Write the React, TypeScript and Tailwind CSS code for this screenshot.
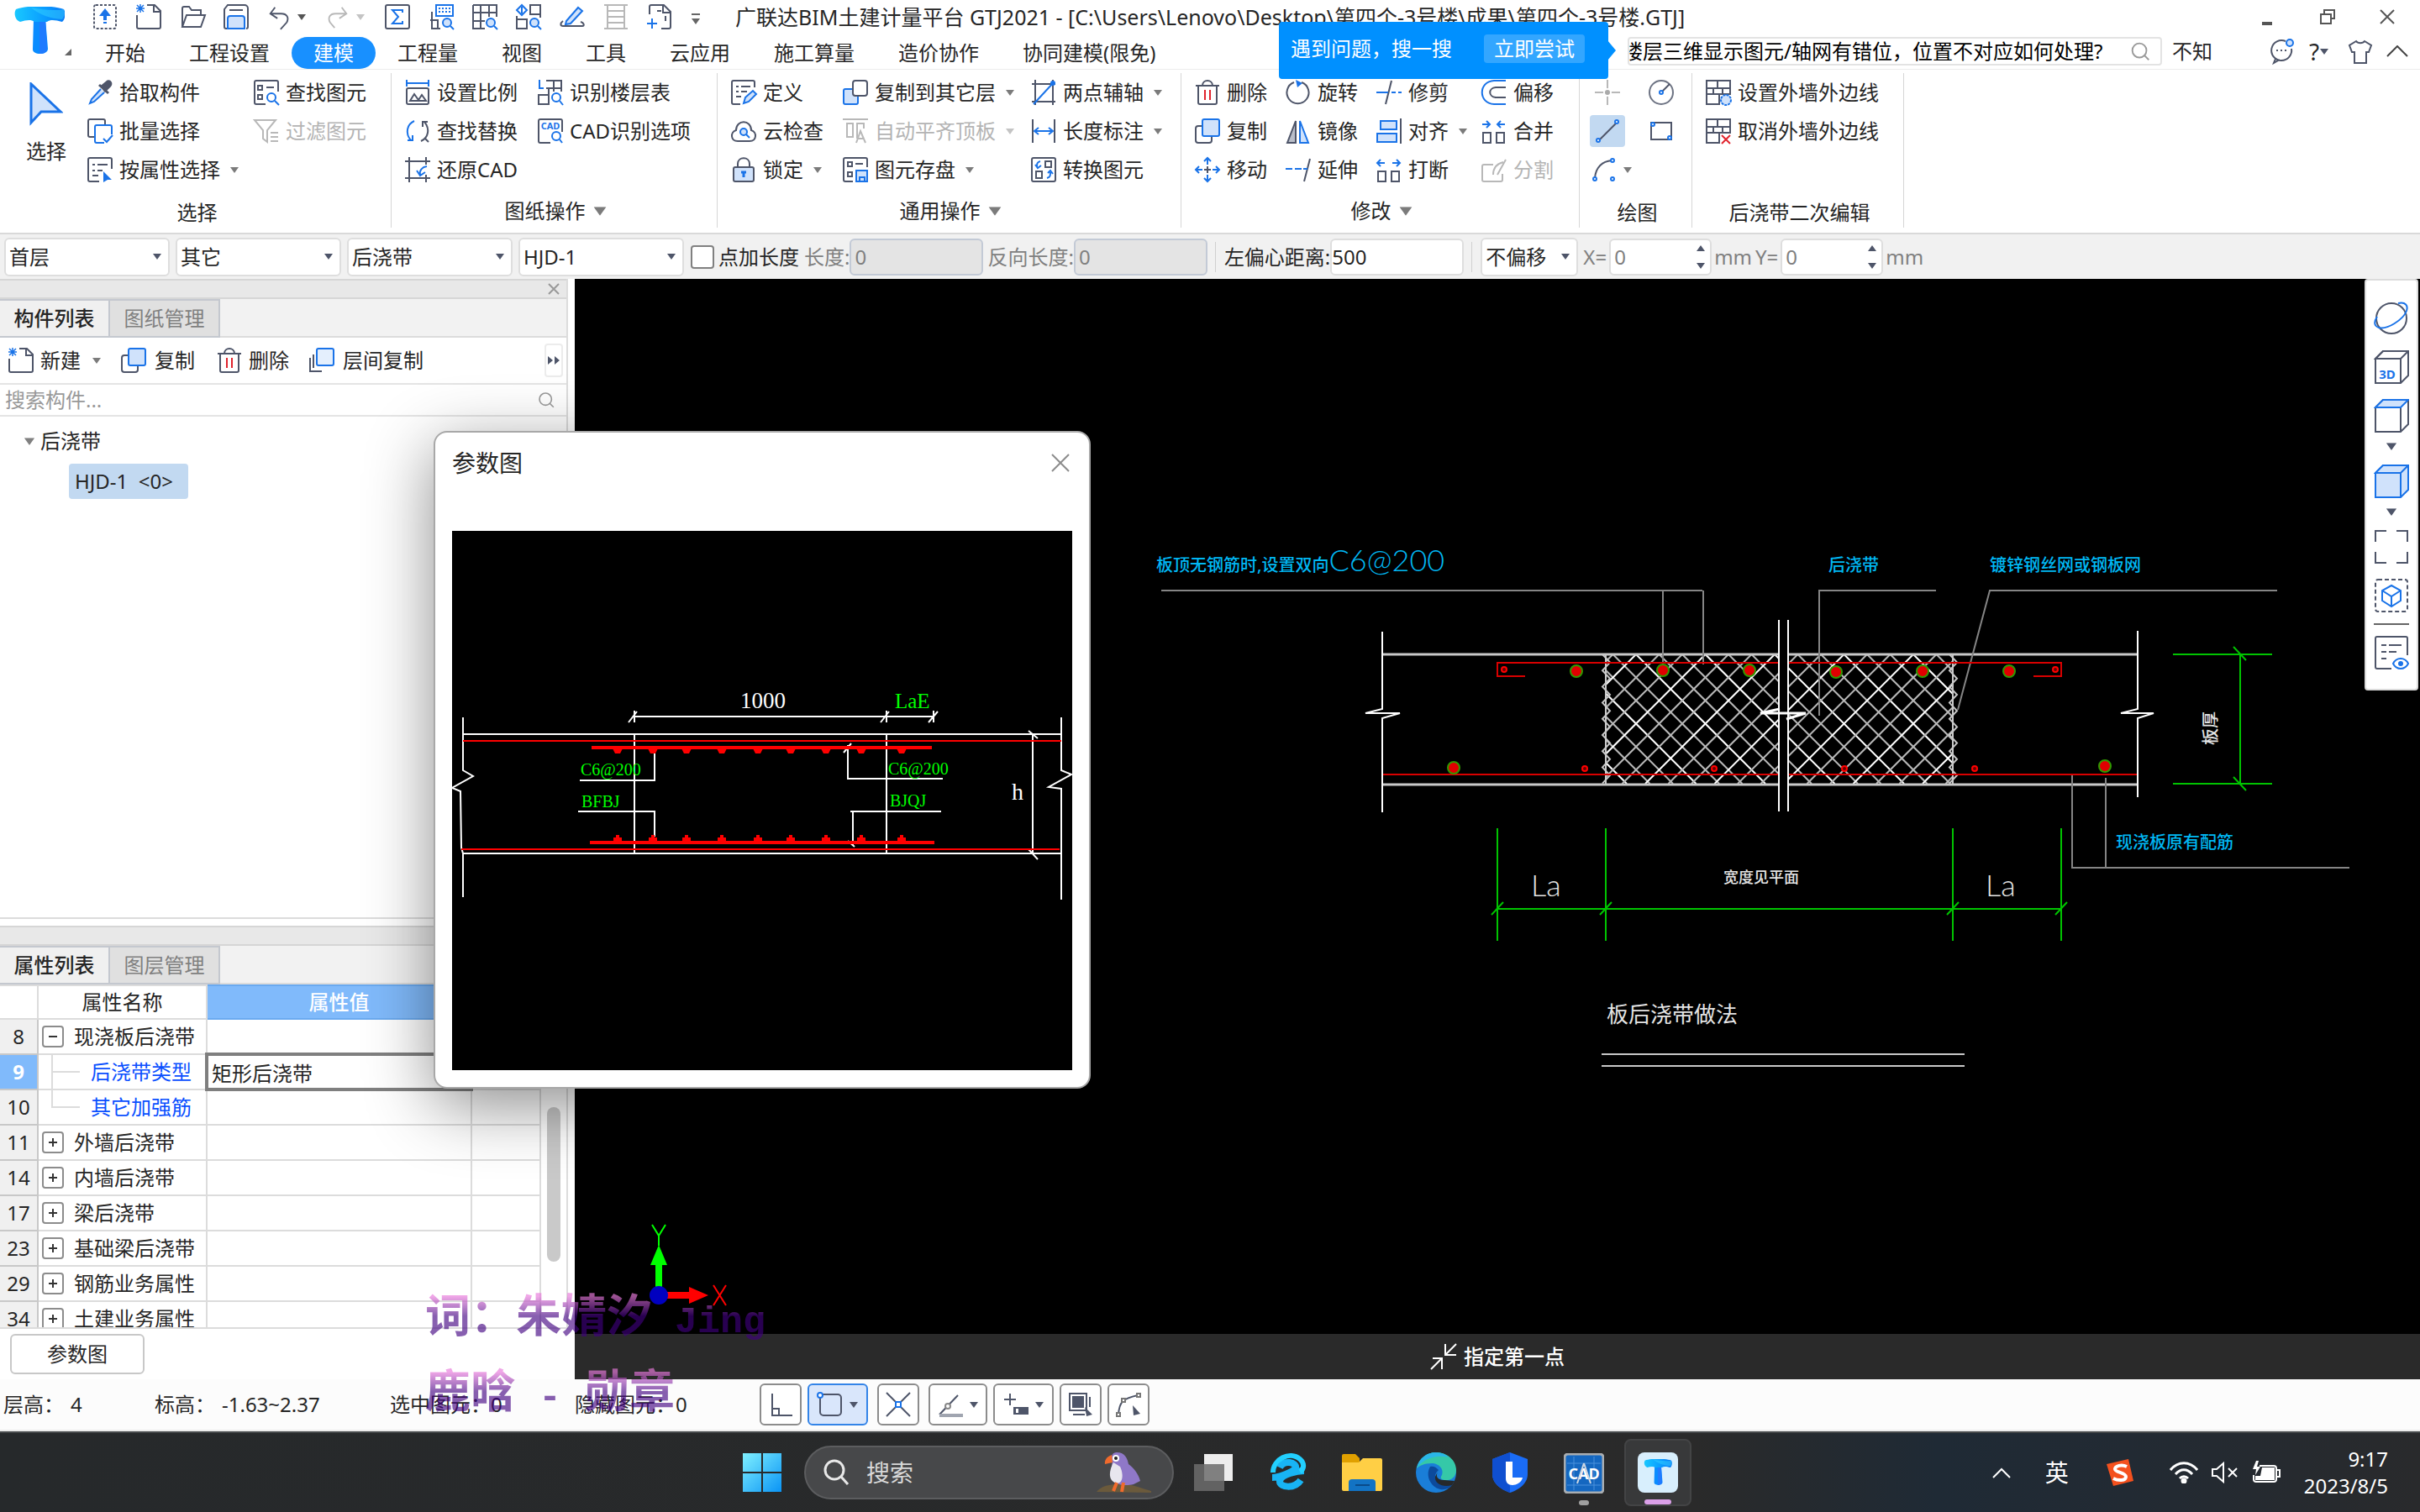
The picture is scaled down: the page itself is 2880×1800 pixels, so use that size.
import { useState } from "react";
import type { ReactNode } from "react";

const D = "#4e5569";
const B = "#1a73e8";
const L = "#d0e2fb";
const G = "#b8b8b8";

const ICONS: Record<string, ReactNode> = {
  upload: (
    <>
      <rect x="2" y="1" width="26" height="28" rx="2" stroke={D} strokeDasharray="3 2" />
      <path d="M15 5l7 9h-5v5h-4v-5H8zM13 21h4v2h-4z" fill={B} />
    </>
  ),
  newFile: (
    <>
      <path d="M13 1h9l7 7v19a2 2 0 0 1-2 2H3a2 2 0 0 1-2-2V13M21 1v8h8" stroke={D} />
      <path d="M1 1l8 8M9 1L1 9M5 0v10M0 5h10" stroke={B} strokeWidth="1.5" />
    </>
  ),
  open: <path d="M3 27V5a2 2 0 0 1 2-2h6l3 4h11v5M3 27l5-14h22l-5 14z" stroke={D} />,
  save: (
    <>
      <path d="M6 29H3a2 2 0 0 1-2-2V6l4-5h20a4 4 0 0 1 4 4v22a2 2 0 0 1-2 2" stroke={D} />
      <path d="M7 7h16" stroke={D} />
      <path d="M5 29V17a3 3 0 0 1 3-3h14a3 3 0 0 1 3 3v12z" fill={L} stroke={B} />
    </>
  ),
  undo: <path d="M10 3L4 11l9 6M5 11h13c7 0 10 5 7 11l-8 9" stroke={D} />,
  redo: <path d="M20 3l6 8-9 6M25 11H12c-7 0-10 5-7 11l6 7" stroke={G} />,
  sum: (
    <>
      <rect x="1" y="1" width="28" height="28" rx="2" stroke={D} />
      <path d="M21 10V7H9l7 8-7 8h12v-3" stroke={B} />
    </>
  ),
  calcFind: (
    <>
      <path d="M4 9v20h10M2 19h9v9" stroke={D} />
      <rect x="9" y="1" width="20" height="13" stroke={B} />
      <path d="M12 5h14M12 9h14" stroke={B} strokeDasharray="2 2" />
      <circle cx="22" cy="22" r="5" stroke={B} fill={L} />
      <path d="M26 26l4 4" stroke={B} />
    </>
  ),
  gridFind: (
    <>
      <path d="M1 1h28v14M1 1v28h14M1 10h28M1 20h14M10 1v28M20 1v14" stroke={D} />
      <circle cx="22" cy="22" r="5" stroke={B} fill={L} />
      <path d="M26 26l4 4" stroke={B} />
    </>
  ),
  swapFind: (
    <>
      <path d="M17 1v11h12V1zM1 18h12v11H1zM29 12v4M1 14v4" stroke={D} />
      <path d="M7 1L1 7l6 6 6-6zM7 3v8" stroke={B} />
      <circle cx="22" cy="22" r="5" stroke={B} fill={L} />
      <path d="M26 26l4 4" stroke={B} />
    </>
  ),
  pen: (
    <>
      <path d="M8 20L22 4l5 4-14 15-6 1z" stroke={B} fill={L} />
      <path d="M4 20c-4 3-3 6 0 6h23c3 0 2-4-2-5" stroke={D} />
    </>
  ),
  ladder: <path d="M5 1v28M25 1v28M1 1h28M1 29h28M5 8h20M5 15h20M5 22h20" stroke={G} />,
  addDoc: (
    <>
      <path d="M3 12V3a2 2 0 0 1 2-2h15l8 8v18a2 2 0 0 1-2 2h-9M12 8h5M22 14v6M19 1v9h9" stroke={D} />
      <path d="M6 17v12M0 23h12" stroke={B} />
    </>
  ),
  dropper: (
    <>
      <path d="M17 8l7-6c3-1 5 2 3 5l-6 6zM14 6l11 10" fill={D} stroke={D} strokeWidth="3" />
      <path d="M16 11L5 23l-2 5 5-2 12-11" stroke={B} fill={L} />
    </>
  ),
  listFind: (
    <>
      <path d="M29 14V3a2 2 0 0 0-2-2H3a2 2 0 0 0-2 2v24a2 2 0 0 0 2 2h11" stroke={D} />
      <path d="M5 7h5v5H5zM5 18h5v5H5zM15 9h9" stroke={D} />
      <circle cx="21" cy="21" r="5" stroke={B} />
      <path d="M25 25l5 5" stroke={B} />
    </>
  ),
  batch: (
    <>
      <path d="M8 22H3a2 2 0 0 1-2-2V3a2 2 0 0 1 2-2h16a2 2 0 0 1 2 2v4" stroke={D} />
      <path d="M20 29h-9a2 2 0 0 1-2-2V10a2 2 0 0 1 2-2h16a2 2 0 0 1 2 2v9" stroke={B} />
      <path d="M19 24l4 4 7-8" stroke={B} />
    </>
  ),
  filter: <path d="M1 2h25L16 14v14l-5-4V14zM20 17h9M20 22h9M20 27h9" stroke={G} />,
  attrPick: (
    <>
      <path d="M29 14V3a2 2 0 0 0-2-2H3a2 2 0 0 0-2 2v24a2 2 0 0 0 2 2h11M6 9h3M12 9h12M6 16h3M12 16h6M6 22h7" stroke={D} />
      <path d="M19 17l10 10h-5l-5 3z" fill={B} />
    </>
  ),
  scale: (
    <>
      <path d="M2 4h26M2 0v8M28 0v8" stroke={B} />
      <path d="M4 10h22a2 2 0 0 1 2 2v15a2 2 0 0 1-2 2H4a2 2 0 0 1-2-2V12a2 2 0 0 1 2-2zM6 25l5-8 5 7 4-6 5 7z" stroke={D} />
    </>
  ),
  floorTable: (
    <>
      <path d="M10 1h18v13M10 10h18M19 1v13M1 18h12v11H1zM13 18v-7" stroke={D} />
      <path d="M2 0v10h5" stroke={B} />
      <circle cx="22" cy="21" r="5" stroke={B} />
      <path d="M26 25l4 5" stroke={B} />
    </>
  ),
  replace: (
    <>
      <path d="M11 3C2 7 0 18 7 26M3 26h6v-6" stroke={B} />
      <path d="M19 27c9-4 11-15 4-23M27 4h-6v6M24 24l4 4" stroke={D} />
    </>
  ),
  cadFind: (
    <>
      <path d="M29 16V3a2 2 0 0 0-2-2H3a2 2 0 0 0-2 2v24a2 2 0 0 0 2 2h12" stroke={D} />
      <text x="15" y="13" textAnchor="middle" fontSize="11" fontWeight="700" fill={B}>CAD</text>
      <circle cx="22" cy="21" r="5" stroke={B} />
      <path d="M26 25l3 4" stroke={B} />
    </>
  ),
  restore: (
    <>
      <path d="M0 5h30M0 25h30M5 0v30M25 0v9M25 21v9" stroke={D} />
      <path d="M26 11c-6 1-9 5-8 10M14 16l4 6 6-4" stroke={B} />
    </>
  ),
  define: (
    <>
      <path d="M28 9V3a2 2 0 0 0-2-2H3a2 2 0 0 0-2 2v24a2 2 0 0 0 2 2h8M6 8h3M12 8h11M6 14h3M12 14h7M6 20h6" stroke={D} />
      <path d="M15 28l2-7 9-8 4 4-9 9z" stroke={B} fill={L} />
    </>
  ),
  cloud: (
    <>
      <path d="M8 27c-9 0-9-11-2-13C6 1 24 1 24 14c7 2 7 13-2 13z" stroke={D} />
      <circle cx="15" cy="16" r="4" stroke={B} fill={L} />
      <path d="M18 19l4 4" stroke={B} />
    </>
  ),
  lock: (
    <>
      <path d="M8 12V8c0-9 14-9 14 0v4" stroke={D} />
      <rect x="3" y="12" width="24" height="17" rx="2" fill={L} stroke={D} />
      <path d="M15 17v7M12 18h6" stroke={B} strokeWidth="3" />
    </>
  ),
  copyTo: (
    <>
      <rect x="1" y="11" width="17" height="18" rx="2" fill={L} stroke={B} />
      <rect x="12" y="1" width="17" height="18" rx="3" fill="#fff" stroke={D} />
    </>
  ),
  autoTop: <path d="M0 1h30M5 6h7v16H5zM17 24V6h8v6M16 29l5-14 6 14M18 24h7" stroke={G} />,
  saveElem: (
    <>
      <path d="M29 12V3a2 2 0 0 0-2-2H3a2 2 0 0 0-2 2v24a2 2 0 0 0 2 2h9M6 6h5v5H6zM15 8h9M6 18h5v5H6z" stroke={D} />
      <path d="M16 16h13v13H16zM20 29v-5h6v5" stroke={B} fill={L} />
    </>
  ),
  twoPoint: (
    <>
      <path d="M5 0v30M26 0v30M1 5h28M1 26h28" stroke={D} />
      <path d="M3 29L27 3" stroke={B} />
      <circle cx="26" cy="4" r="3" fill={B} />
    </>
  ),
  length: (
    <>
      <path d="M2 1v28M28 1v28" stroke={D} />
      <path d="M5 15h20M9 11l-5 4 5 4M21 11l5 4-5 4" stroke={B} />
    </>
  ),
  convert: (
    <>
      <path d="M3 1h24a2 2 0 0 1 2 2v24a2 2 0 0 1-2 2H3a2 2 0 0 1-2-2V3a2 2 0 0 1 2-2zM17 5h7v7h-7zM6 17h7v8H6z" stroke={D} />
      <path d="M11 5c-4 1-4 3-4 7M5 9l3 4 4-3M19 25c4-1 4-3 4-7M20 19l3-3 3 4" stroke={B} />
    </>
  ),
  trash: (
    <>
      <path d="M1 7h28M9 7c0-8 12-8 12 0M4 7v20a2 2 0 0 0 2 2h18a2 2 0 0 0 2-2V7" stroke={D} />
      <path d="M12 12v12M18 12v12" stroke="#e0242e" />
    </>
  ),
  copy: (
    <>
      <rect x="1" y="9" width="19" height="20" rx="3" stroke={D} />
      <rect x="9" y="1" width="20" height="20" rx="2" fill={L} stroke={B} />
    </>
  ),
  move: (
    <>
      <path d="M15 11v8M11 15h8" stroke={D} />
      <path d="M15 9V1M11 5l4-4 4 4M15 21v8M11 25l4 4 4-4M9 15H1M5 11l-4 4 4 4M21 15h8M25 11l4 4-4 4" stroke={B} />
    </>
  ),
  rotate: (
    <>
      <path d="M19 3a13 13 0 1 1-9 0" stroke={D} />
      <path d="M12 0l8 4-6 5z" fill={B} />
    </>
  ),
  mirror: (
    <>
      <path d="M12 3v26H2z" fill="#b9bec9" stroke={D} />
      <path d="M17 3v26h10z" fill={L} stroke={B} />
    </>
  ),
  extend: (
    <>
      <path d="M29 2l-7 27" stroke={D} />
      <path d="M0 14h8M11 14h8M21 14h5" stroke={B} />
    </>
  ),
  trim: (
    <>
      <path d="M18 1l-7 28" stroke={D} />
      <path d="M0 15h14M18 15h5M26 15h4" stroke={B} />
    </>
  ),
  align: (
    <>
      <path d="M29 0v30" stroke={D} />
      <path d="M5 3h19v10H5zM1 18h23v10H1z" fill={L} stroke={B} />
    </>
  ),
  breakUp: (
    <>
      <path d="M2 17h9v12H2zM18 17h9v12h-9z" stroke={D} />
      <path d="M10 7H1M5 3L1 7l4 4M19 7h9M24 3l4 4-4 4" stroke={B} />
    </>
  ),
  offset: (
    <>
      <path d="M29 1H15C-4 2-4 28 15 29h14" stroke={B} />
      <path d="M29 9H17c-9 1-9 11 0 12h12" stroke={D} />
    </>
  ),
  merge: (
    <>
      <path d="M2 17h9v12H2zM18 17h9v12h-9z" stroke={D} />
      <path d="M1 7h9M6 3l4 4-4 4M28 7h-9M23 3l-4 4 4 4" stroke={B} />
    </>
  ),
  split: <path d="M14 9H3a2 2 0 0 0-2 2v16a2 2 0 0 0 2 2h20a2 2 0 0 0 2-2v-7M14 21c0-8 4-13 12-15M19 21l10-18" stroke={G} />,
  point: (
    <>
      <path d="M15 0v30M0 15h30" stroke={G} />
      <circle cx="15" cy="15" r="4" fill="#aaa" stroke="#fff" />
    </>
  ),
  circle: (
    <>
      <circle cx="15" cy="15" r="14" stroke="#6d7383" />
      <path d="M15 15L25 5" stroke={D} />
      <circle cx="15" cy="15" r="2" stroke={B} fill="#fff" />
    </>
  ),
  line: (
    <>
      <path d="M5 26L26 5" stroke={D} />
      <circle cx="4" cy="26" r="2" stroke={B} fill="#fff" />
      <circle cx="26" cy="4" r="2" stroke={B} fill="#fff" />
    </>
  ),
  rect: (
    <>
      <rect x="3" y="5" width="24" height="20" stroke={D} />
      <circle cx="5" cy="7" r="2" stroke={B} fill="#fff" />
      <circle cx="25" cy="23" r="2" stroke={B} fill="#fff" />
    </>
  ),
  arc: (
    <>
      <path d="M4 25C5 12 13 5 24 4" stroke={D} />
      <circle cx="4" cy="26" r="2" stroke={B} />
      <circle cx="25" cy="4" r="2" stroke={B} />
      <circle cx="25" cy="26" r="2" stroke={B} />
    </>
  ),
  wallSet: (
    <>
      <path d="M17 29H1V1h28v16H1M1 10h28M14 1v9M9 10v7M20 10v7M16 17v12" stroke={D} />
      <circle cx="24" cy="24" r="6" fill={L} stroke={B} strokeDasharray="3 1" />
    </>
  ),
  wallCancel: (
    <>
      <path d="M17 29H1V1h28v16H1M1 10h28M14 1v9M9 10v7M20 10v7M16 17v12" stroke={D} />
      <path d="M19 20l10 10M29 20L19 30" stroke="#e0242e" />
    </>
  ),
  layers: (
    <>
      <path d="M1 12v16h14M5 8v16" stroke={D} />
      <rect x="9" y="1" width="20" height="20" rx="2" fill="#e4effd" stroke={B} />
    </>
  ),
  chat: (
    <>
      <path d="M20 3a12 12 0 1 0 7 9M8 24l-2 5 7-4" stroke={D} />
      <path d="M9 14h2M14 14h2M19 14h2" stroke={D} />
      <circle cx="25" cy="5" r="4" fill={L} stroke={B} />
    </>
  ),
  shirt: <path d="M10 3c2 3 8 3 10 0l8 5-3 8h-3v13H8V16H5L2 8z" stroke={D} />,
  search: (
    <>
      <circle cx="14" cy="14" r="9" stroke="#999" />
      <path d="M20 20l6 6" stroke="#999" />
    </>
  ),
};

type IconProps = { name: string; className?: string };

const Icon = ({ name, className = "size-[30px]" }: IconProps) => (
  <svg viewBox="0 0 30 30" fill="none" strokeWidth="2" className={`shrink-0 overflow-visible ${className}`}>
    {ICONS[name]}
  </svg>
);

const Caret = ({ className = "text-[#7b7b7b]" }: { className?: string }) => (
  <svg viewBox="0 0 10 7" className={`h-[7px] w-[10px] shrink-0 ${className}`}>
    <path d="M0 0h10L5 7z" fill="currentColor" />
  </svg>
);

const Hammer = ({ className }: { className: string }) => (
  <svg viewBox="0 0 60 58" className={className}>
    <defs>
      <linearGradient id="head" x1="0" x2="1" y1="0" y2="0">
        <stop offset="0" stopColor="#19c8ff" />
        <stop offset="0.6" stopColor="#0a9cff" />
        <stop offset="1" stopColor="#0878f5" />
      </linearGradient>
    </defs>
    <path d="M23 14h14l3 36c0 8-19 8-18 0z" fill="#0a8cff" />
    <path d="M30 14h7l2 36c0 5-5 6-9 6z" fill="#1f7bff" />
    <path d="M2 3c14-5 42-5 57 0 3 5 1 13-2 15-8-2-14-3-18 0H24c-4-3-10-2-17 0C1 16-1 8 2 3z" fill="url(#head)" />
    <path d="M20 1c14 3 30 4 39 2 2 5 0 10-2 12-14-1-27-5-37-14z" fill="#33d2ff" opacity="0.5" />
  </svg>
);

type Tool = { icon: string; label: string; caret?: boolean; disabled?: boolean };

const ToolButton = ({ icon, label, caret, disabled }: Tool) => (
  <button type="button" disabled={disabled} className="flex h-[46px] items-center gap-2 whitespace-nowrap disabled:text-[#b4b4b4]">
    <Icon name={icon} />
    {label}
    {caret && <span className="pl-1"><Caret className={disabled ? "text-[#c4c4c4]" : "text-[#7b7b7b]"} /></span>}
  </button>
);

type GroupProps = { label: string; caret?: boolean; className: string; children: ReactNode };

const Group = ({ label, caret, className, children }: GroupProps) => (
  <section className={`flex shrink-0 ${className}`}>
    <div className="flex flex-1 flex-col">
      <div className="flex h-[138px]">{children}</div>
      <div className={`flex h-[52px] items-center justify-center gap-3 ${caret ? "" : "pt-1 pl-1"}`}>
        {label}
        {caret && <Caret className="scale-150 text-[#7b7b7b]" />}
      </div>
    </div>
    <div className="h-[184px] w-px bg-[#d6d6d6]" />
  </section>
);

const Column = ({ tools, className = "" }: { tools: Tool[]; className?: string }) => (
  <div className={`flex shrink-0 flex-col ${className}`}>
    {tools.map((tool) => (
      <ToolButton key={tool.label} {...tool} />
    ))}
  </div>
);

const QUICK = ["sum", "calcFind", "gridFind", "swapFind", "pen", "ladder", "addDoc"];
const TABS = ["开始", "工程设置", "建模", "工程量", "视图", "工具", "云应用", "施工算量", "造价协作", "协同建模(限免)"];

const Header = () => {
  const [tab, setTab] = useState("建模");
  const [query, setQuery] = useState("楼层三维显示图元/轴网有错位，位置不对应如何处理?");

  return (
    <header className="relative flex h-[82px] shrink-0 bg-white">
      <div className="flex w-[99px] shrink-0 items-end pb-4 pl-[17px]">
        <Hammer className="h-[58px] w-[60px]" />
        <svg viewBox="0 0 8 8" className="size-2"><path d="M8 0v8H0z" fill="#666" /></svg>
      </div>
      <div className="flex min-w-0 flex-1 flex-col">
        <div className="flex h-10 items-center">
          {["upload", "newFile", "open", "save"].map((name) => (
            <button key={name} type="button" aria-label={name} className="flex w-[52px] shrink-0 justify-center">
              <Icon name={name} />
            </button>
          ))}
          <button type="button" aria-label="undo" className="flex w-[70px] shrink-0 items-center gap-2 pl-[11px]">
            <Icon name="undo" className="size-7" /><Caret className="text-[#555]" />
          </button>
          <button type="button" aria-label="redo" className="flex w-[70px] shrink-0 items-center gap-2 pl-[11px]">
            <Icon name="redo" className="size-7" /><Caret className="text-[#c4c4c4]" />
          </button>
          {QUICK.map((name) => (
            <button key={name} type="button" aria-label={name} className="flex w-[52px] shrink-0 justify-center">
              <Icon name={name} />
            </button>
          ))}
          <button type="button" aria-label="customize" className="flex w-[34px] shrink-0 flex-col items-center gap-1 pt-1">
            <span className="h-[2px] w-[10px] bg-[#666]" />
            <Caret className="text-[#666]" />
          </button>
          <h1 className="flex-1 truncate pl-[30px] text-[25px]">广联达BIM土建计量平台 GTJ2021 - [C:\Users\Lenovo\Desktop\第四个-3号楼\成果\第四个-3号楼.GTJ]</h1>
          <div className="flex w-[192px] shrink-0 items-center justify-between pr-[30px]">
            <button type="button" aria-label="minimize" className="flex h-5 w-5 items-end justify-center">
              <span className="h-1 w-3 bg-[#555]" />
            </button>
            <button type="button" aria-label="restore">
              <svg viewBox="0 0 18 18" className="size-[18px]" fill="none" stroke="#555" strokeWidth="2">
                <path d="M5 5V1h12v10h-4M1 6h12v11H1z" />
              </svg>
            </button>
            <button type="button" aria-label="close">
              <svg viewBox="0 0 18 18" className="size-[18px]" fill="none" stroke="#555" strokeWidth="2">
                <path d="M1 1l16 16M17 1L1 17" />
              </svg>
            </button>
          </div>
        </div>
        <nav className="flex h-[42px] items-end">
          {TABS.map((name) => (
            <button
              key={name}
              type="button"
              onClick={() => setTab(name)}
              className={`h-[38px] shrink-0 whitespace-nowrap rounded-full px-[26px] ${tab === name ? "bg-[#1890ff] text-white" : ""}`}
            >
              {name}
            </button>
          ))}
          <div className="ml-auto flex h-[38px] items-center pb-1">
            <label className="flex h-[34px] w-[636px] items-center rounded-sm border-2 border-[#e3e3e3] bg-white">
              <input
                aria-label="搜索"
                value={query}
                onChange={(e) => setQuery(e.target.value)}
                className="min-w-0 flex-1 -indent-2 text-black outline-none"
              />
              <Icon name="search" className="mr-2.5 size-7" />
            </label>
            <span className="ml-3">不知</span>
            <div className="flex items-center pr-3.5 pl-[67px] text-[28px]">
              <button type="button" aria-label="message" className="w-[48px]"><Icon name="chat" /></button>
              <button type="button" aria-label="help" className="flex w-[46px] items-center gap-px">
                ?<Caret className="text-[#4e5569]" />
              </button>
              <button type="button" aria-label="skin" className="w-[46px]"><Icon name="shirt" /></button>
              <button type="button" aria-label="collapse">
                <svg viewBox="0 0 26 14" className="h-[14px] w-[26px]" fill="none" stroke="#444" strokeWidth="2"><path d="M1 13L13 1l12 12" /></svg>
              </button>
            </div>
          </div>
        </nav>
      </div>
      {/* Search hint bubble */}
      <div className="absolute top-[26px] right-[966px] z-10 flex h-[68px] w-[392px] items-center justify-between rounded bg-[#0090ff] pr-7 pb-1 pl-[14px] text-white">
        <span>遇到问题，搜一搜</span>
        <button type="button" className="h-[34px] rounded-sm bg-[#33a6ff] px-3 leading-[34px]">立即尝试</button>
        <svg viewBox="0 0 10 24" className="absolute top-[22px] -right-[9px] h-6 w-[10px]"><path d="M0 0l10 12L0 24z" fill="#0090ff" /></svg>
      </div>
    </header>
  );
};

const Ribbon = () => (
  <div className="flex shrink-0 border-t border-b-2 border-t-[#ececec] border-b-[#d9d9d9] bg-white pt-1">
    <Group label="选择" className="w-[466px]">
      <button type="button" className="flex w-[104px] shrink-0 flex-col items-center gap-[14px] pt-[11px] pl-1.5">
        <svg viewBox="0 0 40 52" className="h-[52px] w-10"><path d="M2 2v46l12-13h23z" fill="#d0e2fb" stroke="#1a73e8" strokeWidth="3" /></svg>
        选择
      </button>
      <Column
        className="w-[198px]"
        tools={[
          { icon: "dropper", label: "拾取构件" },
          { icon: "batch", label: "批量选择" },
          { icon: "attrPick", label: "按属性选择", caret: true },
        ]}
      />
      <Column
        tools={[
          { icon: "listFind", label: "查找图元" },
          { icon: "filter", label: "过滤图元", disabled: true },
        ]}
      />
    </Group>
    <Group label="图纸操作" caret className="w-[388px]">
      <Column
        className="w-[174px] pl-4"
        tools={[
          { icon: "scale", label: "设置比例" },
          { icon: "replace", label: "查找替换" },
          { icon: "restore", label: "还原CAD" },
        ]}
      />
      <Column
        tools={[
          { icon: "floorTable", label: "识别楼层表" },
          { icon: "cadFind", label: "CAD识别选项" },
        ]}
      />
    </Group>
    <Group label="通用操作" caret className="w-[552px]">
      <Column
        className="w-[149px] pl-4"
        tools={[
          { icon: "define", label: "定义" },
          { icon: "cloud", label: "云检查" },
          { icon: "lock", label: "锁定", caret: true },
        ]}
      />
      <Column
        className="w-[224px]"
        tools={[
          { icon: "copyTo", label: "复制到其它层", caret: true },
          { icon: "autoTop", label: "自动平齐顶板", caret: true, disabled: true },
          { icon: "saveElem", label: "图元存盘", caret: true },
        ]}
      />
      <Column
        tools={[
          { icon: "twoPoint", label: "两点辅轴", caret: true },
          { icon: "length", label: "长度标注", caret: true },
          { icon: "convert", label: "转换图元" },
        ]}
      />
    </Group>
    <Group label="修改" caret className="w-[474px]">
      <Column
        className="w-[124px] pl-4"
        tools={[
          { icon: "trash", label: "删除" },
          { icon: "copy", label: "复制" },
          { icon: "move", label: "移动" },
        ]}
      />
      <Column
        className="w-[108px]"
        tools={[
          { icon: "rotate", label: "旋转" },
          { icon: "mirror", label: "镜像" },
          { icon: "extend", label: "延伸" },
        ]}
      />
      <Column
        className="w-[125px]"
        tools={[
          { icon: "trim", label: "修剪" },
          { icon: "align", label: "对齐", caret: true },
          { icon: "breakUp", label: "打断" },
        ]}
      />
      <Column
        tools={[
          { icon: "offset", label: "偏移" },
          { icon: "merge", label: "合并" },
          { icon: "split", label: "分割", disabled: true },
        ]}
      />
    </Group>
    <Group label="绘图" className="w-[134px]">
      <div className="grid h-[138px] grid-cols-[64px_42px] grid-rows-3 items-center pl-3">
        <button type="button" aria-label="点" className="flex h-[38px] w-[42px] items-center justify-center"><Icon name="point" /></button>
        <button type="button" aria-label="圆" className="flex h-[38px] w-[42px] items-center justify-center"><Icon name="circle" /></button>
        <button type="button" aria-label="直线" className="flex h-[38px] w-[42px] items-center justify-center rounded bg-[#c2d9f1]"><Icon name="line" /></button>
        <button type="button" aria-label="矩形" className="flex h-[38px] w-[42px] items-center justify-center"><Icon name="rect" /></button>
        <button type="button" aria-label="弧" className="flex h-[38px] items-center gap-2 pl-0.5"><Icon name="arc" /><Caret /></button>
      </div>
    </Group>
    <Group label="后浇带二次编辑" className="w-[252px]">
      <Column
        className="pl-4"
        tools={[
          { icon: "wallSet", label: "设置外墙外边线" },
          { icon: "wallCancel", label: "取消外墙外边线" },
        ]}
      />
    </Group>
  </div>
);

const Select = ({ label, value, className }: { label: string; value: string; className: string }) => (
  <div className={`grid h-[46px] shrink-0 items-center ${className}`}>
    <select aria-label={label} defaultValue={value} className="col-start-1 row-start-1 h-full w-full appearance-none rounded-md border-2 border-[#dedede] bg-white pl-1 outline-none">
      <option>{value}</option>
    </select>
    <span className="pointer-events-none col-start-1 row-start-1 justify-self-end pr-2.5"><Caret className="text-[#4e5569]" /></span>
  </div>
);

const Spinner = ({ label }: { label: string }) => (
  <label className="flex shrink-0 items-center gap-[3px] text-[#808080]">
    {label}=
    <span className="flex h-11 w-[122px] items-center rounded-md border-2 border-[#dedede] bg-white pr-1.5 pl-1">
      <input defaultValue="0" className="min-w-0 flex-1 outline-none" />
      <svg viewBox="0 0 10 28" className="h-7 w-[10px]" fill="#4e5569"><path d="M0 7h10L5 0zM0 21h10l-5 7z" /></svg>
    </span>
    <span>mm</span>
  </label>
);

const OptionBar = () => (
  <div className="flex h-[53px] shrink-0 items-center bg-[#f1f1f1] pl-[5px] whitespace-nowrap">
    <div className="flex gap-[7px]">
      <Select label="楼层" value="首层" className="w-[197px]" />
      <Select label="类别" value="其它" className="w-[197px]" />
      <Select label="构件类型" value="后浇带" className="w-[197px]" />
      <Select label="构件" value="HJD-1" className="w-[197px]" />
    </div>
    <label className="ml-2 flex shrink-0 items-center gap-[5px]">
      <input type="checkbox" className="size-7 appearance-none rounded border-2 border-[#808080] bg-white checked:bg-[#1890ff]" />
      点加长度
    </label>
    <label className="ml-1.5 flex shrink-0 items-center text-[#808080]">
      长度:
      <input disabled defaultValue="0" className="h-11 w-[159px] rounded-md border-2 border-[#c3cad6] bg-[#e4e4e4] pl-1" />
    </label>
    <label className="ml-[5px] flex shrink-0 items-center text-[#808080]">
      反向长度:
      <input disabled defaultValue="0" className="h-11 w-[159px] rounded-md border-2 border-[#c3cad6] bg-[#e4e4e4] pl-1" />
    </label>
    <span className="mr-2.5 ml-[9px] h-9 w-px shrink-0 bg-[#d0d0d0]" />
    <label className="flex shrink-0 items-center">
      左偏心距离:
      <input defaultValue="500" className="h-11 w-[159px] rounded-md border-2 border-[#dedede] bg-white outline-none" />
    </label>
    <span className="mr-2.5 ml-[9px] h-9 w-px shrink-0 bg-[#d0d0d0]" />
    <Select label="偏移" value="不偏移" className="w-[116px]" />
    <div className="ml-1.5 flex gap-1">
      <Spinner label="X" />
      <Spinner label="Y" />
    </div>
  </div>
);

const PanelTabs = ({ names }: { names: string[] }) => (
  <div className="flex h-[46px] shrink-0 border-b-2 border-[#dcdcdc] bg-[#f2f2f2]">
    {names.map((name, i) => (
      <button
        key={name}
        type="button"
        className={`h-[46px] w-[131px] border-2 border-l-0 border-[#c4c8cf] ${i === 0 ? "bg-[#f0f0f0] font-medium" : "bg-[#e0e0e0] text-[#808080]"}`}
      >
        {name}
      </button>
    ))}
  </div>
);

type Row = { no: number; name: string; kind: "open" | "closed" | "child"; last?: boolean; value?: string };

const ROWS: Row[] = [
  { no: 8, name: "现浇板后浇带", kind: "open" },
  { no: 9, name: "后浇带类型", kind: "child", value: "矩形后浇带" },
  { no: 10, name: "其它加强筋", kind: "child", last: true },
  { no: 11, name: "外墙后浇带", kind: "closed" },
  { no: 14, name: "内墙后浇带", kind: "closed" },
  { no: 17, name: "梁后浇带", kind: "closed" },
  { no: 23, name: "基础梁后浇带", kind: "closed" },
  { no: 29, name: "钢筋业务属性", kind: "closed" },
  { no: 34, name: "土建业务属性", kind: "closed" },
];

const PropertyTable = () => (
  <div className="flex h-[410px] shrink-0 overflow-hidden border-b-2 border-[#dcdcdc]">
    <table className="h-max w-[643px] table-fixed border-collapse">
      <colgroup>
        <col className="w-[45px]" />
        <col className="w-[201px]" />
        <col className="w-[315px]" />
        <col className="w-[82px]" />
      </colgroup>
      <thead>
        <tr className="h-10">
          <th className="border-2 border-l-0 border-[#dcdcdc] p-0" />
          <th className="border-2 border-[#dcdcdc] p-0 font-normal">属性名称</th>
          <th className="border-2 border-[#6aaaf0] bg-[#80bafb] p-0 font-medium text-white">属性值</th>
          <th className="border-2 border-[#dcdcdc] p-0 font-normal">附加</th>
        </tr>
      </thead>
      <tbody>
        {ROWS.map((row) => (
          <tr key={row.no} className="h-[42px]">
            <td className={`border-2 border-l-0 border-[#c8c8c8] p-0 text-center ${row.value ? "bg-[#80bafb] font-bold text-white" : "bg-[#f0f0f0]"}`}>{row.no}</td>
            <td className="border-2 border-[#dcdcdc] p-0">
              <div className="flex h-10 items-center whitespace-nowrap">
                {row.kind === "child" ? (
                  <>
                    <svg viewBox="0 0 62 42" className="h-[42px] w-[62px] shrink-0" fill="none" stroke="#dcdcdc" strokeWidth="2">
                      <path d={row.last ? "M16 0v21h33" : "M16 0v42M16 21h33"} />
                    </svg>
                    <span className="text-[#0a50ff]">{row.name}</span>
                  </>
                ) : (
                  <>
                    <button type="button" aria-label={row.name} className="mr-3 ml-1 flex size-[26px] shrink-0 items-center justify-center rounded border-2 border-[#8c8c8c]">
                      <svg viewBox="0 0 10 10" className="size-[10px]" stroke="#333" strokeWidth="2">
                        <path d={row.kind === "open" ? "M0 5h10" : "M0 5h10M5 0v10"} />
                      </svg>
                    </button>
                    {row.name}
                  </>
                )}
              </div>
            </td>
            <td className={row.value ? "border-4 border-[#7f7f7f] p-0" : "border-2 border-[#dcdcdc] p-0"}>
              {row.value && <input aria-label={row.name} defaultValue={row.value} className="block h-9 w-full pl-1 outline-none" />}
            </td>
            <td className="border-2 border-[#dcdcdc]" />
          </tr>
        ))}
      </tbody>
    </table>
    <div className="flex flex-1 justify-center pt-[146px]">
      <div className="h-[184px] w-4 rounded-full bg-[#c9c9c9]" />
    </div>
  </div>
);

const Sidebar = () => (
  <aside className="flex w-[684px] shrink-0 flex-col bg-white pr-2">
    <div className="flex min-h-0 flex-1 flex-col border-r-2 border-b-2 border-[#dcdcdc]">
      <div className="flex h-6 shrink-0 items-center justify-end border-y-2 border-[#d6d6d6] bg-[#e8e8e8] pr-2">
        <button type="button" aria-label="关闭">
          <svg viewBox="0 0 14 14" className="size-[14px]" stroke="#999" strokeWidth="2"><path d="M1 1l12 12M13 1L1 13" /></svg>
        </button>
      </div>
      <PanelTabs names={["构件列表", "图纸管理"]} />
      <div className="flex h-[56px] shrink-0 items-center border-b-2 border-[#e4e4e4] pl-2.5 whitespace-nowrap">
        <button type="button" className="flex w-[134px] items-center gap-2">
          <Icon name="newFile" />新建<span className="pl-1.5"><Caret /></span>
        </button>
        <button type="button" className="flex w-[114px] items-center gap-2.5"><Icon name="copy" />复制</button>
        <button type="button" className="flex w-[110px] items-center gap-2"><Icon name="trash" />删除</button>
        <button type="button" className="flex items-center gap-2.5"><Icon name="layers" />层间复制</button>
        <button type="button" aria-label="更多" className="mr-1 ml-auto flex h-10 w-[22px] items-center justify-center rounded border-2 border-[#ececec]">
          <svg viewBox="0 0 14 10" className="h-[10px] w-[14px]" fill="#4e5569"><path d="M0 0l6 5-6 5zM8 0l6 5-6 5z" /></svg>
        </button>
      </div>
      <label className="flex h-[38px] shrink-0 items-center border-b-2 border-[#e4e4e4] pr-3 pl-1.5">
        <input aria-label="搜索构件" placeholder="搜索构件..." className="min-w-0 flex-1 outline-none placeholder:text-[#999]" />
        <Icon name="search" className="size-6" />
      </label>
      <ul className="pt-2.5">
        <li className="flex h-[38px] items-center gap-2 pl-[30px]"><Caret className="scale-125 text-[#808080]" />后浇带</li>
        <li className="pt-2 pl-[82px]">
          <button type="button" className="h-[42px] w-[142px] rounded bg-[#c2d9f1] px-[7px] text-left">HJD-1 &nbsp;&lt;0&gt;</button>
        </li>
      </ul>
    </div>
    <div className="mt-2 flex shrink-0 flex-col border-r-2 border-[#dcdcdc]">
      <div className="h-6 shrink-0 border-y-2 border-[#d6d6d6] bg-[#e8e8e8]" />
      <PanelTabs names={["属性列表", "图层管理"]} />
      <PropertyTable />
    </div>
    <div className="flex h-[60px] shrink-0 items-center pl-3">
      <button type="button" className="h-12 w-[160px] rounded-md border-2 border-[#c8c8c8] bg-white">参数图</button>
    </div>
  </aside>
);

const BARS = [[1876, 799], [1979, 798], [2082, 798], [2185, 800], [2288, 799], [2391, 799], [1730, 914], [2505, 912]];
const DOTS = [[1790, 797], [2446, 797], [1886, 915], [2040, 915], [2195, 915], [2350, 915]];
const HATCH = Array.from({ length: 30 }, (_, i) => i - 8);
const zigzag = (x: number) => "M" + Array.from({ length: 17 }, (_, i) => `${x + (i % 2 ? 5 : -4)} ${779 + i * 9.6}`).join("L");

/* Section detail of the post-cast strip */
const Drawing = () => (
  <svg viewBox="684 332 2196 1256" preserveAspectRatio="xMaxYMid meet" className="min-h-0 w-full flex-1" fill="none">
    <clipPath id="hatchClip"><rect x="1911" y="779" width="413" height="154" /></clipPath>
    <g clipPath="url(#hatchClip)">
      {HATCH.map((k) => (
        <g key={k} stroke={k % 3 === 0 ? "#ffffff" : "#b8b8b8"} strokeWidth="2">
          <path d={`M${1947 + k * 27.5} 779l154 154`} />
          <path d={`M${1947 + k * 27.5} 779l-154 154`} />
        </g>
      ))}
    </g>
    <g stroke="#c8c8c8" strokeWidth="2">
      <path d={zigzag(1911)} />
      <path d={zigzag(2324)} />
      <path d="M1911 779v154M2324 779v154" />
    </g>
    <g stroke="#c8c8c8" strokeWidth="3">
      <path d="M1645 779h900M1645 934h900" />
    </g>
    <g stroke="#858585" strokeWidth="2">
      <path d="M1382 703h644M1979 703v88M2027 703v88M2165 852V703h139M2330 845l38-142h342M2466 923v110h330M2506 926v107" />
    </g>
    <g stroke="#d80000" strokeWidth="2">
      <path d="M1815 805h-33v-16h671v16h-33M1645 922h900" />
    </g>
    <rect x="2117" y="738" width="11" height="228" fill="#000" />
    <g stroke="#ffffff" strokeWidth="2">
      <path d="M1645 752v92l-20 5h41l-21 6v112M2544 751v93l-20 5h39l-19 6v94" />
      <path d="M2117 738v228M2128 738v228" />
      <path d="M2118 844l-23 5h54l-23 7" strokeWidth="3" />
    </g>
    {BARS.map(([x, y]) => (
      <circle key={`${x}-${y}`} cx={x} cy={y} r="7" fill="#e00000" stroke="#2f9a00" strokeWidth="2" />
    ))}
    {DOTS.map(([x, y]) => (
      <circle key={`${x}-${y}`} cx={x} cy={y} r="3" fill="#600" stroke="#ff0000" strokeWidth="2" />
    ))}
    <g stroke="#00c400" strokeWidth="2">
      <path d="M1782 986v134M1911 986v134M2324 986v134M2453 986v134M1782 1082h671" />
      <path d="M1775 1089l14-15M1904 1089l14-15M2317 1089l14-15M2446 1089l14-15" />
      <path d="M2586 779h118M2586 933h118M2666 779v154M2658 770l15 16M2658 925l15 16" />
    </g>
    <path d="M1906 1255h432M1906 1269h432" stroke="#c8c8c8" strokeWidth="2" />
    <g fill="#00b8f4" fontSize="20" fontWeight="500">
      <text x="1376" y="680">板顶无钢筋时,设置双向<tspan fontSize="36" fontFamily="Lato" fontWeight="300">C6@200</tspan></text>
      <text x="2176" y="680">后浇带</text>
      <text x="2368" y="680">镀锌钢丝网或钢板网</text>
      <text x="2518" y="1010">现浇板原有配筋</text>
    </g>
    <g fill="#e4e4e4">
      <text x="1822" y="1067" fontSize="36" fontFamily="Lato" fontWeight="300">La</text>
      <text x="2363" y="1067" fontSize="36" fontFamily="Lato" fontWeight="300">La</text>
      <text x="2096" y="1051" fontSize="18" fontWeight="500" textAnchor="middle">宽度见平面</text>
      <text x="1912" y="1217" fontSize="26">板后浇带做法</text>
      <text x="2630" y="867" fontSize="20" fontWeight="500" textAnchor="middle" dominantBaseline="central" transform="rotate(-90 2630 867)">板厚</text>
    </g>
    {/* Axis gizmo */}
    <path d="M780 1532v-26h-6l10-24 10 24h-6v26z" fill="#00ff00" />
    <path d="M794 1538h26v-6l23 10-23 10v-6h-26z" fill="#ff0000" />
    <circle cx="784" cy="1542" r="11" fill="#0000c0" />
    <path d="M776 1458l8 13 8-13M784 1471v12" stroke="#00ff00" strokeWidth="2" />
    <path d="M849 1530l15 24M864 1530l-15 24" stroke="#ff0000" strokeWidth="2" />
  </svg>
);

const Cube = ({ top, body, front }: { top: string; body: string; front: string }) => (
  <>
    <path d="M1 10L10 1h30v29l-9 9H1zM31 10v29" stroke={body} fill={front} />
    <path d="M1 10L10 1h30l-9 9z" stroke={top === "none" ? body : B} fill={top} />
  </>
);

const ViewButton = ({ label, caret, children }: { label: string; caret?: boolean; children: ReactNode }) => (
  <button type="button" aria-label={label} className="flex flex-col items-center">
    <svg viewBox="-1 -1 42 42" className="size-[42px]" fill="none" strokeWidth="2">{children}</svg>
    {caret && <span className="pt-3 pb-px"><Caret className="scale-125 text-[#4e5569]" /></span>}
  </button>
);

const ViewTools = () => (
  <div className="absolute top-0 right-0.5 flex h-[490px] w-16 flex-col items-center gap-4 rounded border-2 border-[#dcdcdc] bg-white pt-6">
    <ViewButton label="动态观察">
      <circle cx="20" cy="20" r="18" stroke={D} />
      <path d="M28 2c9-2 12 3 10 9C34 22 14 34 5 31c-6-2-6-7-2-13" stroke={B} />
    </ViewButton>
    <ViewButton label="三维">
      <Cube top="none" body={D} front="none" />
      <text x="15" y="34" textAnchor="middle" fontSize="15" fontWeight="700" fill={B}>3D</text>
    </ViewButton>
    <ViewButton label="俯视" caret><Cube top={L} body={D} front="none" /></ViewButton>
    <ViewButton label="实体" caret><Cube top={L} body={B} front={L} /></ViewButton>
    <ViewButton label="全屏">
      <path d="M1 14V1h13M26 1h13v13M39 26v13H26M14 39H1V26" stroke={D} />
    </ViewButton>
    <ViewButton label="区域">
      <rect x="1" y="1" width="38" height="38" rx="3" stroke={D} strokeDasharray="5 3" />
      <path d="M20 8l11 6v12l-11 7-11-7V14zM9 14l11 7 11-7M20 21v12" stroke={B} />
    </ViewButton>
    <div className="-mt-1 border-t-2 border-[#666] pt-3">
      <ViewButton label="显示设置">
        <path d="M39 23V3a2 2 0 0 0-2-2H3a2 2 0 0 0-2 2v34a2 2 0 0 0 2 2h17M8 11h6M17 11h15M8 19h6M17 19h9M8 27h6" stroke={D} />
        <path d="M22 33c4-8 14-8 18 0-4 8-14 8-18 0z" stroke={B} />
        <circle cx="31" cy="33" r="3" fill={B} />
      </ViewButton>
    </div>
  </div>
);

const TOP_BARS = [197, 239, 279, 321, 364, 403, 445, 487, 535];

const ParamDialog = () => (
  <section role="dialog" aria-label="参数图" className="absolute top-[513px] left-[516px] z-20 flex w-[782px] flex-col rounded-2xl border-2 border-[#a8a8a8] bg-white px-5 pb-5 shadow-[0_20px_80px_rgba(0,0,0,0.45)]">
    <div className="flex h-[117px] items-start justify-between pt-4 pr-0.5">
      <h2 className="text-[28px] leading-10">参数图</h2>
      <button type="button" aria-label="关闭" className="pt-2">
        <svg viewBox="0 0 24 24" className="size-6" stroke="#8c8c8c" strokeWidth="2"><path d="M2 2l20 20M22 2L2 22" /></svg>
      </button>
    </div>
    <svg viewBox="0 0 738 642" className="w-full bg-black" fill="none" strokeWidth="2">
      <g stroke="#fff">
        <path d="M13 242h712M13 384h712M217 242v142M517 242v142M217 221h356" />
        <path d="M13 222v63l12 7-25 14 10 4 1 67 2 7v52M725 222v63l12 5-27 15 15 2v132" />
        <path d="M217 214v14M517 214v14M573 214v14M210 228l10-13M510 228l10-13M567 228l11-13" />
        <path d="M691 242v142M686 238l11 9M686 379l11 12" />
        <path d="M152 297h89v-33M150 334h91v30" />
        <path d="M584 295H471v-40M466 264l9-11M582 334H474M477 334v40M471 369l8 7" />
      </g>
      <g stroke="#f00">
        <path d="M13 250h712M11 379h712" />
        <path d="M166 258h405M164 371h410" strokeWidth="4" />
      </g>
      {TOP_BARS.map((x) => (
        <g key={x} fill="#f00">
          <path d={`M${x - 6} 259h12l-3 6h-6z`} />
          <path d={`M${x - 5} 370v-5h3v-3h4v3h3v5z`} />
        </g>
      ))}
      <g fontFamily="Liberation Serif">
        <text x="343" y="211" fontSize="27" fill="#fff">1000</text>
        <text x="666" y="320" fontSize="28" fill="#fff">h</text>
        <text x="527" y="211" fontSize="25" fill="#0f0">LaE</text>
        <text x="153" y="291" fontSize="20" fill="#0f0">C6@200</text>
        <text x="154" y="329" fontSize="20" fill="#0f0">BFBJ</text>
        <text x="519" y="290" fontSize="20" fill="#0f0">C6@200</text>
        <text x="521" y="328" fontSize="20" fill="#0f0">BJQJ</text>
      </g>
    </svg>
  </section>
);

const SNAPS: { label: string; className: string; caret?: boolean; art: ReactNode }[] = [
  { label: "正交", className: "w-[50px]", art: <path d="M5 2v26h24M5 20h8v8" stroke={D} /> },
  {
    label: "对象捕捉",
    className: "w-[72px] border-[#3384e8] bg-[#d9e6fb]",
    caret: true,
    art: <><rect x="3" y="3" width="25" height="25" rx="4" stroke={D} /><circle cx="3" cy="4" r="3" fill="#fff" stroke={B} /></>,
  },
  { label: "交点", className: "ml-1 w-[50px]", art: <><path d="M1 1l28 28M29 1L1 29" stroke={D} /><path d="M12 12h6v6h-6z" fill="#fff" stroke={B} /></> },
  { label: "角度", className: "ml-1 w-[70px]", caret: true, art: <><path d="M2 27L24 4" stroke={D} /><path d="M2 28h28" stroke="#a0a5b0" strokeWidth="4" /><circle cx="12" cy="17" r="3" fill="#fff" stroke="#888" /></> },
  { label: "动态输入", className: "w-[72px]", caret: true, art: <><path d="M8 2v14M1 9h14" stroke={D} /><path d="M12 18h18v9H12z" fill={D} /><path d="M15 20h3v5h-3z" fill="#fff" /></> },
  { label: "选择集", className: "w-[50px]", art: <><path d="M2 2h20v20H2z" stroke={D} /><path d="M5 5h14v14H5zM20 18l9 9-7 2z" fill={D} /><path d="M6 27h14M26 6v12" stroke={D} /></> },
  { label: "折线", className: "w-[50px]", art: <><path d="M3 27C4 12 8 8 26 4" stroke={D} /><path d="M1 25h4v4H1zM25 2h4v4h-4zM7 8h4v4H7z" fill="#fff" stroke="#777" /><path d="M20 16l9 10-8 2z" fill={D} /></> },
];

const StatusBar = () => (
  <footer className="flex h-[62px] shrink-0 items-center border-b-2 border-[#ececec] bg-[#fcfcfc] whitespace-nowrap">
    <span className="flex w-[184px] shrink-0 gap-2 pl-1">层高：<span>4</span></span>
    <span className="flex w-[280px] shrink-0 gap-2">标高：<span>-1.63~2.37</span></span>
    <span className="w-[220px] shrink-0">选中图元：0</span>
    <span className="w-[220px] shrink-0">隐藏图元：0</span>
    <div className="flex gap-[7px]">
      {SNAPS.map((snap) => (
        <button key={snap.label} type="button" aria-label={snap.label} className={`flex h-[50px] shrink-0 items-center justify-center gap-2 rounded-md border-2 ${snap.className} ${snap.className.includes("bg-") ? "" : "border-[#8c8c8c] bg-white"}`}>
          <svg viewBox="0 0 30 30" className="size-[30px] overflow-visible" fill="none" strokeWidth="2">{snap.art}</svg>
          {snap.caret && <Caret className="text-[#4e5569]" />}
        </button>
      ))}
    </div>
  </footer>
);

const Taskbar = () => (
  <div className="flex h-24 shrink-0 items-center border-t-2 border-[#45484a] bg-[linear-gradient(90deg,#26292b_0%,#2a2a2a_70%,#1f2a35_80%,#222a33_88%,#292a2c_100%)] text-white">
    <div className="flex flex-1 items-center pl-[883px]">
      <button type="button" aria-label="开始" className="mr-[26px] shrink-0">
        <svg viewBox="0 0 48 48" className="size-12">
          <defs><linearGradient id="win" x1="0" y1="0" x2="1" y2="1"><stop offset="0" stopColor="#7ff0ff" /><stop offset="1" stopColor="#0a94f5" /></linearGradient></defs>
          <path d="M1 1h22v22H1zM25 1h22v22H25zM1 25h22v22H1zM25 25h22v22H25z" fill="url(#win)" />
        </svg>
      </button>
      <button type="button" className="flex h-16 w-[440px] shrink-0 items-center rounded-full border-2 border-[#5c5d5f] bg-[#47484a] pr-6 pl-5 text-[28px] text-[#d8d8d8]">
        <svg viewBox="0 0 32 32" className="mr-5 size-8" fill="none" stroke="#e8e8e8" strokeWidth="3"><circle cx="14" cy="13" r="11" /><path d="M22 21l8 9" /></svg>
        搜索
        <svg viewBox="0 0 66 48" className="ml-auto h-12 w-[66px]">
          <path d="M0 47c6-8 20-10 34-9 12 1 20 5 31 8v2z" fill="#6b5a3c" />
          <path d="M24 0c10 0 13 8 14 14 6 4 12 12 14 20l-8 4c-8 2-20 2-26-6-4-8 2-16 0-22-1-6 1-10 6-10z" fill="#8f78c8" />
          <path d="M20 12c-6 12-6 22 4 25 8 0 8-12 4-20z" fill="#e8e6ee" />
          <path d="M18 3c-6 2-9 7-8 11l9-2z" fill="#f06a2c" />
          <circle cx="23" cy="7" r="4" fill="#fff" /><circle cx="23" cy="7" r="2" fill="#222" />
          <path d="M24 36l-4 10M32 36l-2 11" stroke="#f06a2c" strokeWidth="4" />
        </svg>
      </button>
      <div className="flex items-center gap-10 pl-6">
        <button type="button" aria-label="任务视图">
          <svg viewBox="0 0 48 48" className="size-12"><path d="M12 2h34v32H12z" fill="#ededed" /><path d="M0 14h36v32H0z" fill="#6c6c6c" opacity="0.85" /></svg>
        </button>
        <button type="button" aria-label="浏览器">
          <svg viewBox="0 0 48 48" className="size-12" fill="none">
            <path d="M5 30C12 30 30 24 33 18c1-6-14-10-19 0M43 22c-8 0-27 4-29 12-1 8 18 10 25-1" stroke="#18b4f4" strokeWidth="8" />
            <path d="M6 24C6 8 26-2 38 8c6 5 5 12 0 15" stroke="#22d0ff" strokeWidth="6" />
          </svg>
        </button>
        <button type="button" aria-label="文件资源管理器">
          <svg viewBox="0 0 48 48" className="size-12"><path d="M0 4a2 2 0 0 1 2-2h14l5 5v8H0z" fill="#e0a000" /><path d="M0 12h20l5-5h21a2 2 0 0 1 2 2v35a2 2 0 0 1-2 2H2a2 2 0 0 1-2-2z" fill="#ffcf45" /><path d="M8 46V36a4 4 0 0 1 4-4h24a4 4 0 0 1 4 4v10z" fill="#1273c4" /><path d="M16 39h17" stroke="#0a4a88" strokeWidth="2" /></svg>
        </button>
        <button type="button" aria-label="Edge">
          <svg viewBox="0 0 48 48" className="size-12">
            <circle cx="24" cy="24" r="24" fill="#1a7ed8" />
            <path d="M1 19C4 6 14 0 24 0c14 0 24 10 24 21 0 9-7 13-14 12-5-1-5-3-3-6 3-8-5-14-12-14C10 13 4 16 1 19z" fill="#35c8a8" />
            <path d="M1 19C4 6 14 0 24 0c6 0 11 2 15 6C24 2 8 8 1 19z" fill="#2ab6e8" />
            <path d="M17 17c-6 10 0 24 12 27 6 1 11-1 15-6-8 3-20 0-21-9 0-4 2-6 4-8-3-4-7-5-10-4z" fill="#0c4a9c" />
            <path d="M27 21c-3 5-4 12 7 12l12 1-3 5c-10 3-21-1-20-10z" fill="#26292b" />
          </svg>
        </button>
        <button type="button" aria-label="安全卫士">
          <svg viewBox="0 0 48 48" className="size-12"><path d="M24 0l21 8v18c0 12-12 19-21 22C15 45 3 38 3 26V8z" fill="#1a6cf5" /><path d="M24 0v48C15 45 3 38 3 26V8z" fill="#0f4fd0" /><path d="M19 11h8v19h12c-1 6-8 9-12 9-5 0-8-3-8-8z" fill="#fff" /></svg>
        </button>
        <button type="button" aria-label="CAD" className="flex flex-col items-center pt-4">
          <svg viewBox="0 0 48 48" className="size-12"><rect x="1" y="1" width="46" height="46" rx="4" fill="#1467c0" stroke="#a9adb0" strokeWidth="3" /><path d="M4 12h40M4 38h40M12 4v40M36 4v40" stroke="#4a92dc" /><text x="24" y="31" textAnchor="middle" fontSize="18" fontWeight="700" fill="#fff">CAD</text><path d="M24 12l-8 24M24 12l8 24" stroke="#cfd8e2" strokeWidth="2" /></svg>
          <span className="mt-2 h-1.5 w-3 rounded-full bg-[#a0a0a0]" />
        </button>
        <button type="button" aria-label="广联达" className="-ml-4 flex h-20 w-20 flex-col items-center rounded-lg border-2 border-[#434445] bg-[#38393a] pt-3.5">
          <span className="flex size-12 items-center justify-center rounded-lg bg-[#d8effd]"><Hammer className="h-8 w-9" /></span>
          <span className="mt-2 h-1.5 w-8 rounded-full bg-[#dba0e8]" />
        </button>
      </div>
    </div>
    <div className="flex shrink-0 items-center pr-[38px]">
      <svg viewBox="0 0 22 13" className="mr-[41px] h-[13px] w-[22px]" fill="none" stroke="#fff" strokeWidth="2"><path d="M1 12L11 2l10 10" /></svg>
      <span className="mr-[45px] text-[28px]">英</span>
      <svg viewBox="0 0 32 32" className="mr-[43px] size-8"><path d="M0 6L26 0l6 26-24 6z" fill="#f4511e" /><path d="M24 9c-6-3-14-1-14 3s13 4 13 9-9 5-15 2" stroke="#fff" strokeWidth="4" fill="none" /></svg>
      <svg viewBox="0 0 34 26" className="mr-4 h-[26px] w-[34px]" fill="none" stroke="#fff" strokeWidth="3"><path d="M1 10C10-1 24-1 33 10M7 15c6-7 14-7 20 0M12 20c3-3 7-3 10 0" /><circle cx="17" cy="23" r="2" fill="#fff" /></svg>
      <svg viewBox="0 0 32 26" className="mr-4 h-[26px] w-8" fill="none" stroke="#fff" strokeWidth="2"><path d="M1 9h5l8-7v22l-8-7H1zM20 8l10 10M30 8L20 18" /></svg>
      <svg viewBox="0 0 34 28" className="mr-7 h-7 w-[34px]" fill="none" stroke="#fff" strokeWidth="2"><path d="M9 6h17a3 3 0 0 1 3 3v13a3 3 0 0 1-3 3H5a3 3 0 0 1-3-3v-5M30 11h3v8h-3" /><path d="M12 8h15v15H4v-5h6zM5 0L1 10h4l-1 7 6-10H6l2-7z" fill="#fff" stroke="none" /></svg>
      <div className="flex flex-col items-end leading-8">
        <span>9:17</span>
        <span>2023/8/5</span>
      </div>
    </div>
  </div>
);

/* Desktop lyrics float above every window */
const Lyrics = () => (
  <div className="pointer-events-none absolute bottom-[100px] left-[506px] z-30 text-[54px] leading-[90px] font-bold whitespace-pre">
    {[["词：朱婧汐", " Jing", ""], ["鹿晗", " - ", "勋章"]].map(([head, mid, tail]) => (
      <p key={head} className="h-[90px] bg-[linear-gradient(180deg,#e87adbaa_26%,#400080a0_52%)] bg-clip-text text-transparent">
        {head}
        <span className="font-['Liberation_Mono'] text-[45px]">{mid}</span>
        {tail}
      </p>
    ))}
  </div>
);

export default function App() {
  return (
    <div className="relative flex h-screen flex-col overflow-hidden bg-white font-['Noto_Sans','Noto_Sans_CJK_SC',sans-serif] text-2xl leading-8 text-[#262626]">
      <Header />
      <Ribbon />
      <OptionBar />
      <main className="flex min-h-0 flex-1">
        <Sidebar />
        <div className="relative flex min-w-0 flex-1 flex-col bg-black">
          <Drawing />
          <ViewTools />
          <div className="flex h-[54px] shrink-0 items-center justify-center gap-2 bg-[#2a2a2a] font-medium text-white">
            <svg viewBox="0 0 32 32" className="size-8" fill="none" stroke="#fff" strokeWidth="2"><path d="M1 31l13-13M3 18h11v13M31 1L18 14M18 1v13h13" /></svg>
            指定第一点
          </div>
        </div>
      </main>
      <StatusBar />
      <Taskbar />
      <ParamDialog />
      <Lyrics />
    </div>
  );
}
